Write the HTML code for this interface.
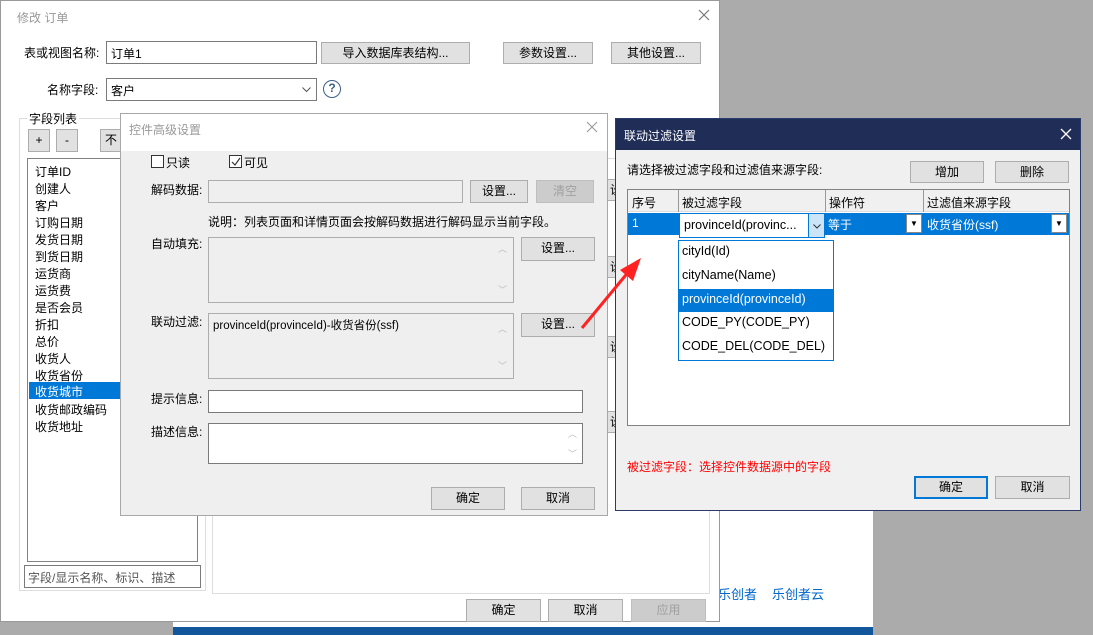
<!DOCTYPE html>
<html><head><meta charset="utf-8"><style>
*{box-sizing:border-box;margin:0;padding:0}
body{width:1093px;height:635px;background:#ababab;position:relative;overflow:hidden;font:12px "Liberation Sans","Noto Sans CJK SC",sans-serif;color:#000}
.a{position:absolute}
.btn{position:absolute;background:#e1e1e1;border:1px solid #adadad;text-align:center;font-size:12px;line-height:20px}
.dis{color:#a0a0a0;background:#ccc;border-color:#bfbfbf}
.inp{position:absolute;background:#fff;border:1px solid #7a7a7a}
.t{position:absolute;white-space:nowrap}
.li{position:absolute;left:7px;white-space:nowrap}
</style></head><body>
<!-- background page -->
<div class="a" style="left:173px;top:400px;width:700px;height:227px;background:#fff"></div>
<div class="a" style="left:173px;top:627px;width:700px;height:8px;background:#12569c"></div>
<div class="t" style="left:718px;top:584px;color:#0066cc;font-size:13px">乐创者</div>
<div class="t" style="left:772px;top:584px;color:#0066cc;font-size:13px">乐创者云</div>

<!-- main dialog -->
<div class="a" style="left:0;top:0;width:720px;height:622px;background:#fff;border:1px solid #999">
 <div class="t" style="left:16px;top:8px;color:#999;font-size:12px">修改 订单</div>
 <svg class="a" style="left:697px;top:8px" width="12" height="12"><path d="M1 1L11 11M11 1L1 11" stroke="#777" stroke-width="1.2"/></svg>
 <div class="t" style="left:23px;top:43px">表或视图名称:</div>
 <div class="inp" style="left:105px;top:40px;width:211px;height:23px;padding:3px 4px">订单1</div>
 <div class="btn" style="left:320px;top:41px;width:149px;height:22px">导入数据库表结构...</div>
 <div class="btn" style="left:502px;top:41px;width:90px;height:22px">参数设置...</div>
 <div class="btn" style="left:610px;top:41px;width:90px;height:22px">其他设置...</div>
 <div class="t" style="left:46px;top:80px">名称字段:</div>
 <div class="inp" style="left:105px;top:77px;width:211px;height:23px;padding:3px 4px">客户<svg class="a" style="right:5px;top:8px" width="9" height="6"><path d="M0.5 0.5L4.5 4.5L8.5 0.5" stroke="#555" fill="none"/></svg></div>
 <div class="a" style="left:322px;top:79px;width:18px;height:18px;border:1.5px solid #3a5f8a;border-radius:50%;color:#3a5f8a;text-align:center;font-size:12px;line-height:15px;font-weight:bold">?</div>
 <div class="a" style="left:18px;top:117px;width:187px;height:473px;border:1px solid #ddd"></div>
 <div class="t" style="left:26px;top:109px;background:#fff;padding:0 2px">字段列表</div>
 <div class="btn" style="left:27px;top:128px;width:22px;height:23px;line-height:21px">+</div>
 <div class="btn" style="left:55px;top:128px;width:22px;height:23px;line-height:21px">-</div>
 <div class="btn" style="left:99px;top:128px;width:22px;height:23px;line-height:21px">不</div>
 <div class="a" style="left:26px;top:157px;width:171px;height:404px;background:#fff;border:1px solid #828282">
  <div class="li" style="top:4px">订单ID</div><div class="li" style="top:21px">创建人</div><div class="li" style="top:38px">客户</div>
  <div class="li" style="top:55px">订购日期</div><div class="li" style="top:72px">发货日期</div><div class="li" style="top:89px">到货日期</div>
  <div class="li" style="top:106px">运货商</div><div class="li" style="top:123px">运货费</div><div class="li" style="top:140px">是否会员</div>
  <div class="li" style="top:157px">折扣</div><div class="li" style="top:174px">总价</div><div class="li" style="top:191px">收货人</div>
  <div class="li" style="top:208px">收货省份</div>
  <div class="a" style="left:1px;top:223px;width:100px;height:17px;background:#0078d7"></div>
  <div class="li" style="top:224px;color:#fff">收货城市</div>
  <div class="li" style="top:242px">收货邮政编码</div><div class="li" style="top:259px">收货地址</div>
 </div>
 <div class="inp" style="left:23px;top:564px;width:177px;height:23px;padding:3px 3px;color:#555">字段/显示名称、标识、描述</div>
 <div class="a" style="left:211px;top:157px;width:498px;height:436px;background:#fff;border:1px solid #ddd"></div>
 <div class="btn" style="left:605px;top:178px;width:20px;height:22px">设</div>
 <div class="btn" style="left:605px;top:255px;width:20px;height:22px">设</div>
 <div class="btn" style="left:605px;top:335px;width:20px;height:22px">设</div>
 <div class="btn" style="left:605px;top:410px;width:20px;height:22px">设</div>
 <div class="btn" style="left:465px;top:598px;width:75px;height:23px">确定</div>
 <div class="btn" style="left:547px;top:598px;width:75px;height:23px">取消</div>
 <div class="btn dis" style="left:630px;top:598px;width:75px;height:23px">应用</div>
</div>

<!-- middle dialog -->
<div class="a" style="left:120px;top:113px;width:488px;height:403px;background:#efefef;border:1px solid #a8a8a8">
 <div class="a" style="left:0;top:0;width:486px;height:37px;background:#fff"></div>
 <div class="t" style="left:8px;top:7px;color:#999">控件高级设置</div>
 <svg class="a" style="left:465px;top:7px" width="12" height="12"><path d="M1 1L11 11M11 1L1 11" stroke="#999" stroke-width="1.1"/></svg>
 <div class="a" style="left:30px;top:41px;width:13px;height:13px;border:1px solid #333;background:#fff"></div>
 <div class="t" style="left:45px;top:40px">只读</div>
 <div class="a" style="left:108px;top:41px;width:13px;height:13px;border:1px solid #333;background:#fff"><svg class="a" style="left:1px;top:1px" width="10" height="10"><path d="M1 5L4 8L9 1" stroke="#333" fill="none" stroke-width="1.2"/></svg></div>
 <div class="t" style="left:123px;top:40px">可见</div>
 <div class="t" style="left:30px;top:67px">解码数据:</div>
 <div class="a" style="left:87px;top:66px;width:255px;height:23px;border:1px solid #adadad;background:#efefef"></div>
 <div class="btn" style="left:349px;top:66px;width:58px;height:23px">设置...</div>
 <div class="btn dis" style="left:415px;top:66px;width:58px;height:23px">清空</div>
 <div class="t" style="left:87px;top:99px">说明：列表页面和详情页面会按解码数据进行解码显示当前字段。</div>
 <div class="t" style="left:30px;top:121px">自动填充:</div>
 <div class="a" style="left:87px;top:123px;width:306px;height:66px;border:1px solid #adadad;background:#efefef"><span class="a" style="right:6px;top:4px;color:#bbb;font-size:9px">︿</span><span class="a" style="right:6px;bottom:6px;color:#bbb;font-size:9px">﹀</span></div>
 <div class="btn" style="left:400px;top:123px;width:74px;height:24px">设置...</div>
 <div class="t" style="left:30px;top:199px">联动过滤:</div>
 <div class="a" style="left:87px;top:199px;width:306px;height:66px;border:1px solid #adadad;background:#efefef;padding:3px 4px;font-size:11.5px">provinceId(provinceId)-收货省份(ssf)<span class="a" style="right:6px;top:8px;color:#bbb;font-size:9px">︿</span><span class="a" style="right:6px;bottom:6px;color:#bbb;font-size:9px">﹀</span></div>
 <div class="btn" style="left:400px;top:199px;width:74px;height:24px">设置...</div>
 <div class="t" style="left:30px;top:276px">提示信息:</div>
 <div class="inp" style="left:87px;top:276px;width:375px;height:23px"></div>
 <div class="t" style="left:30px;top:309px">描述信息:</div>
 <div class="inp" style="left:87px;top:309px;width:375px;height:41px"><span class="a" style="right:5px;top:3px;color:#bbb;font-size:9px">︿</span><span class="a" style="right:5px;bottom:3px;color:#bbb;font-size:9px">﹀</span></div>
 <div class="btn" style="left:310px;top:373px;width:74px;height:23px">确定</div>
 <div class="btn" style="left:400px;top:373px;width:74px;height:23px">取消</div>
</div>

<!-- right dialog -->
<div class="a" style="left:615px;top:118px;width:466px;height:393px;background:#f0f0f0;border:1px solid #2a3a6a">
 <div class="a" style="left:0;top:0;width:464px;height:31px;background:#1f2d57"></div>
 <div class="t" style="left:8px;top:8px;color:#fff">联动过滤设置</div>
 <svg class="a" style="left:444px;top:9px" width="12" height="12"><path d="M1 1L11 11M11 1L1 11" stroke="#fff" stroke-width="1.3"/></svg>
 <div class="t" style="left:11px;top:42px">请选择被过滤字段和过滤值来源字段:</div>
 <div class="btn" style="left:294px;top:42px;width:74px;height:22px">增加</div>
 <div class="btn" style="left:379px;top:42px;width:74px;height:22px">删除</div>
 <div class="a" style="left:11px;top:70px;width:443px;height:237px;background:#fff;border:1px solid #828282">
  <div class="a" style="left:0;top:0;width:441px;height:22px;background:#f0f0f0;border-bottom:1px solid #ddd"></div>
  <div class="t" style="left:4px;top:4px">序号</div>
  <div class="a" style="left:50px;top:0;height:22px;border-left:1px solid #999"></div>
  <div class="t" style="left:54px;top:4px">被过滤字段</div>
  <div class="a" style="left:197px;top:0;height:22px;border-left:1px solid #999"></div>
  <div class="t" style="left:201px;top:4px">操作符</div>
  <div class="a" style="left:295px;top:0;height:22px;border-left:1px solid #999"></div>
  <div class="t" style="left:299px;top:4px">过滤值来源字段</div>
  <div class="a" style="left:0;top:23px;width:441px;height:22px;background:#0078d7"></div>
  <div class="t" style="left:4px;top:26px;color:#fff">1</div>
  <div class="a" style="left:51px;top:23px;width:146px;height:25px;background:#fff;border:1px solid #0078d7;padding:4px 4px;font-size:12.5px">provinceId(provinc...<span class="a" style="right:0;top:0;width:16px;height:23px;background:#cce4f7;border-left:1px solid #0078d7"><svg class="a" style="left:4px;top:10px" width="8" height="5"><path d="M0.5 0.5L4 4L7.5 0.5" stroke="#333" fill="none"/></svg></span></div>
  <div class="t" style="left:200px;top:26px;color:#fff">等于</div>
  <div class="a" style="left:278px;top:24px;width:16px;height:19px;background:#fff;border:1px solid #888;font-size:8px;text-align:center;line-height:17px">▼</div>
  <div class="t" style="left:299px;top:26px;color:#fff">收货省份(ssf)</div>
  <div class="a" style="left:423px;top:24px;width:16px;height:19px;background:#fff;border:1px solid #888;font-size:8px;text-align:center;line-height:17px">▼</div>
 </div>
 <div class="a" style="left:62px;top:121px;width:156px;height:121px;background:#fff;border:1px solid #0078d7;font-size:12.5px">
  <div class="t" style="left:3px;top:3px">cityId(Id)</div>
  <div class="t" style="left:3px;top:27px">cityName(Name)</div>
  <div class="a" style="left:0;top:48px;width:154px;height:23px;background:#0078d7"></div>
  <div class="t" style="left:3px;top:51px;color:#fff">provinceId(provinceId)</div>
  <div class="t" style="left:3px;top:74px">CODE_PY(CODE_PY)</div>
  <div class="t" style="left:3px;top:98px">CODE_DEL(CODE_DEL)</div>
 </div>
 <div class="t" style="left:11px;top:339px;color:#f00">被过滤字段：选择控件数据源中的字段</div>
 <div class="btn" style="left:298px;top:357px;width:74px;height:23px;border:2px solid #0078d7;line-height:19px">确定</div>
 <div class="btn" style="left:379px;top:357px;width:75px;height:23px">取消</div>
</div>

<!-- arrow on top -->
<svg class="a" style="left:570px;top:250px" width="80" height="90"><line x1="12" y1="78" x2="60" y2="20" stroke="#f22" stroke-width="3"/><polygon points="71,8 50,20 63,31" fill="#f22"/></svg>
</body></html>
